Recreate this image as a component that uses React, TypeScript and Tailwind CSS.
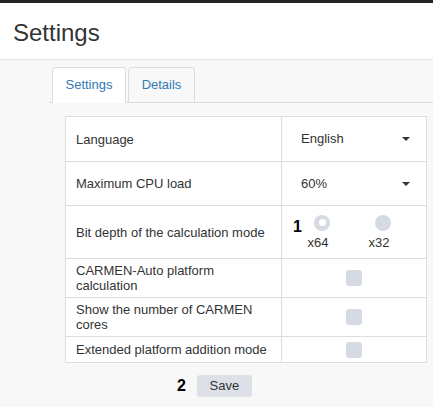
import React from 'react';

// Caret used by the select-like cells
function Caret() {
  return (
    <div className="w-0 h-0 border-l-[4px] border-r-[4px] border-t-[4px] border-l-transparent border-r-transparent border-t-[#333]" />
  );
}

function Radio({ checked }: { checked?: boolean }) {
  return (
    <div className="w-[16px] h-[16px] rounded-full bg-[#d6dae1] flex items-center justify-center">
      {checked && <div className="w-[7px] h-[7px] rounded-full bg-white" />}
    </div>
  );
}

function Checkbox() {
  return <div className="w-[16px] h-[16px] rounded-[3px] bg-[#d6dbe3]" />;
}

function Row({
  label,
  height,
  first,
  children,
}: {
  label: string;
  height: string;
  first?: boolean;
  children: React.ReactNode;
}) {
  return (
    <div className={`flex ${height} ${first ? '' : 'border-t border-[#ddd]'}`}>
      <div className="w-[216px] shrink-0 border-r border-[#ddd] pl-[10px] pr-[10px] flex items-center leading-[15px]">
        {label}
      </div>
      <div className="flex-1 flex items-center">{children}</div>
    </div>
  );
}

function SelectCell({ value }: { value: string }) {
  return (
    <div className="flex-1 flex items-center justify-between pl-[19px] pr-[16px]">
      <span>{value}</span>
      <Caret />
    </div>
  );
}

export default function App() {
  return (
    <div
      className="w-[433px] h-[407px] bg-[#f8f8f8] text-[#333] overflow-hidden"
      style={{ fontFamily: '"Liberation Sans", Arial, sans-serif' }}
    >
      <div className="h-[3px] bg-[#222]" />
      <div className="h-[57px] bg-white border-b border-[#e5e5e5] pl-[13px] pt-[16px]">
        <h1 className="text-[24px] leading-[28px] text-[#333]">Settings</h1>
      </div>

      <div className="pl-[49px]">
        {/* Tabs */}
        <div className="mt-[7px] flex border-b border-[#ddd] pl-[3px]">
          <div className="-mb-px w-[74px] py-[7px] text-center text-[13px] leading-[20px] text-[#337ab7] bg-white border border-[#ddd] border-b-white rounded-t-[4px]">
            Settings
          </div>
          <div className="ml-[2px] w-[67px] py-[7px] text-center text-[13px] leading-[20px] text-[#337ab7] border border-b-0 border-[#ddd] rounded-t-[4px]">
            Details
          </div>
        </div>

        {/* Settings table */}
        <div className="ml-[16px] mt-[13px] w-[362px] bg-white border border-[#ddd] text-[13px]">
          <Row label="Language" height="h-[44px]" first>
            <SelectCell value="English" />
          </Row>
          <Row label="Maximum CPU load" height="h-[44px]">
            <SelectCell value="60%" />
          </Row>
          <Row label="Bit depth of the calculation mode" height="h-[53px]">
            <div className="flex items-start pl-[11px]">
              <span className="mt-[3px] text-[16px] leading-[18px] font-bold text-black w-[9px]">1</span>
              <div className="ml-[0px] w-[32px] flex flex-col items-center">
                <div className="ml-[8px]">
                  <Radio checked />
                </div>
                <span className="mt-[4px] leading-[15px]">x64</span>
              </div>
              <div className="ml-[29px] w-[32px] flex flex-col items-center">
                <div className="ml-[8px]">
                  <Radio />
                </div>
                <span className="mt-[4px] leading-[15px]">x32</span>
              </div>
            </div>
          </Row>
          <Row label="CARMEN-Auto platform calculation" height="h-[39px]">
            <div className="flex-1 flex justify-center">
              <Checkbox />
            </div>
          </Row>
          <Row label="Show the number of CARMEN cores" height="h-[39px]">
            <div className="flex-1 flex justify-center">
              <Checkbox />
            </div>
          </Row>
          <Row label="Extended platform addition mode" height="h-[26px]">
            <div className="flex-1 flex justify-center">
              <Checkbox />
            </div>
          </Row>
        </div>

        {/* Save */}
        <div className="mt-[12px] ml-[128px] flex items-center">
          <span className="text-[16px] leading-[18px] font-bold text-black">2</span>
          <button className="ml-[11px] w-[55px] h-[22px] rounded-[3px] bg-[#dde1e7] text-[13px] text-[#333]">
            Save
          </button>
        </div>
      </div>
    </div>
  );
}
